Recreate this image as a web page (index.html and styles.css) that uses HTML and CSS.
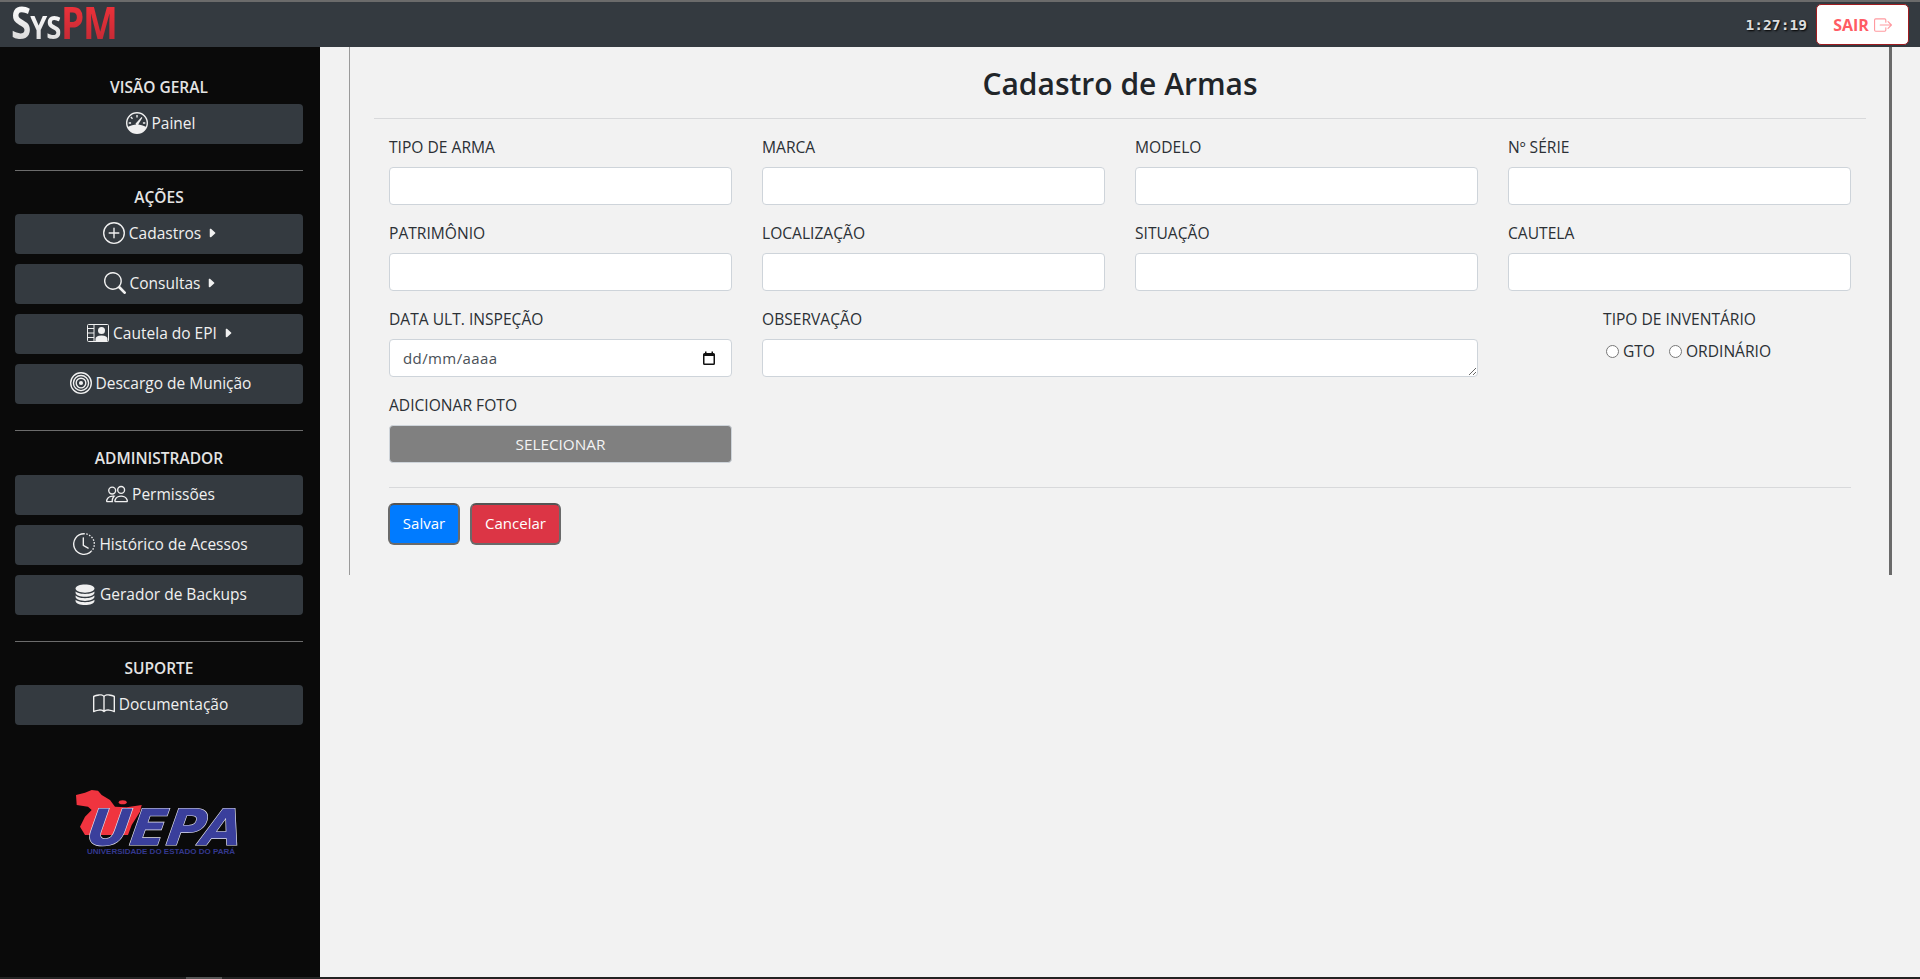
FILE: index.html
```html
<!DOCTYPE html>
<html lang="pt-BR">
<head>
<meta charset="utf-8">
<title>SysPM - Cadastro de Armas</title>
<link rel="stylesheet" href="styles.css">
</head>
<body>
<header class="topbar">
  <div class="brand"><span class="brand-s">S</span><span class="brand-ys">YS</span><span class="brand-pm">PM</span></div>
  <div class="top-right">
    <span class="clock">1:27:19</span>
    <a class="logout">SAIR
      <svg class="ic-logout" viewBox="0 0 16 16" fill="currentColor"><path fill-rule="evenodd" d="M10 12.5a.5.5 0 0 1-.5.5h-8a.5.5 0 0 1-.5-.5v-9a.5.5 0 0 1 .5-.5h8a.5.5 0 0 1 .5.5v2a.5.5 0 0 0 1 0v-2A1.5 1.5 0 0 0 9.5 2h-8A1.5 1.5 0 0 0 0 3.5v9A1.5 1.5 0 0 0 1.5 14h8a1.5 1.5 0 0 0 1.5-1.5v-2a.5.5 0 0 0-1 0v2z"/><path fill-rule="evenodd" d="M15.854 8.354a.5.5 0 0 0 0-.708l-3-3a.5.5 0 0 0-.708.708L14.293 7.5H5.5a.5.5 0 0 0 0 1h8.793l-2.147 2.146a.5.5 0 0 0 .708.708l3-3z"/></svg>
    </a>
  </div>
</header>
<div class="layout">
  <aside class="sidebar">
    <section class="side-group">
      <h6 class="side-title">VISÃO GERAL</h6>
      <a class="side-btn"><svg class="ic" viewBox="0 0 16 16" fill="currentColor"><path fill-rule="evenodd" d="M8 0a8 8 0 1 1 0 16A8 8 0 0 1 8 0zm0 1a7 7 0 0 0-6.4 9.8C3.2 9.7 5.5 9 8 9s4.800.7 6.400 1.800A7 7 0 0 0 8 1z"/><path d="M7.500 2.200h1v1.800h-1zM3.200 4l.7-.7 1.200 1.200-.7.7zM2 7.500h1.700v1H2zM12.300 7.500H14v1h-1.700zM11.300 3.700l.6.500-2.700 4.300a1.100 1.100 0 1 1-1.500-.9z"/></svg>Painel</a>
    </section>
    <hr class="side-rule">
    <section class="side-group">
      <h6 class="side-title">AÇÕES</h6>
      <a class="side-btn"><svg class="ic" viewBox="0 0 16 16" fill="currentColor"><path d="M8 15A7 7 0 1 1 8 1a7 7 0 0 1 0 14zm0 1A8 8 0 1 0 8 0a8 8 0 0 0 0 16z"/><path d="M8 4a.5.5 0 0 1 .5.5v3h3a.5.5 0 0 1 0 1h-3v3a.5.5 0 0 1-1 0v-3h-3a.5.5 0 0 1 0-1h3v-3A.5.5 0 0 1 8 4z"/></svg>Cadastros<svg class="caret" viewBox="0 0 16 16" fill="currentColor"><path d="m12.140 8.753-5.482 4.796c-.646.566-1.658.106-1.658-.753V3.204a1 1 0 0 1 1.659-.753l5.480 4.796a1 1 0 0 1 0 1.506z"/></svg></a>
      <a class="side-btn"><svg class="ic" viewBox="0 0 16 16" fill="currentColor"><path d="M11.742 10.344a6.500 6.500 0 1 0-1.397 1.398h-.001c.03.04.062.078.098.115l3.850 3.850a1 1 0 0 0 1.415-1.414l-3.850-3.850a1.007 1.007 0 0 0-.115-.1zM12 6.500a5.500 5.500 0 1 1-11 0 5.500 5.500 0 0 1 11 0z"/></svg>Consultas<svg class="caret" viewBox="0 0 16 16" fill="currentColor"><path d="m12.140 8.753-5.482 4.796c-.646.566-1.658.106-1.658-.753V3.204a1 1 0 0 1 1.659-.753l5.480 4.796a1 1 0 0 1 0 1.506z"/></svg></a>
      <a class="side-btn"><svg class="ic" viewBox="0 0 22 18" fill="none" stroke="currentColor"><rect x=".5" y=".5" width="21" height="17" rx="1"/><path d="M7 .5v17M.5 4.500H7M.5 9H7M.5 13.500H7"/><circle cx="14.500" cy="6.500" r="3.500" fill="currentColor" stroke="none"/><path d="M8.500 17v-2c0-2 2-3.500 6-3.500s6 1.500 6 3.500v2z" fill="currentColor" stroke="none"/></svg>Cautela do EPI<svg class="caret" viewBox="0 0 16 16" fill="currentColor"><path d="m12.140 8.753-5.482 4.796c-.646.566-1.658.106-1.658-.753V3.204a1 1 0 0 1 1.659-.753l5.480 4.796a1 1 0 0 1 0 1.506z"/></svg></a>
      <a class="side-btn"><svg class="ic" viewBox="0 0 16 16" fill="currentColor"><path d="M8 15A7 7 0 1 1 8 1a7 7 0 0 1 0 14zm0 1A8 8 0 1 0 8 0a8 8 0 0 0 0 16z"/><path d="M8 13A5 5 0 1 1 8 3a5 5 0 0 1 0 10zm0 1A6 6 0 1 0 8 2a6 6 0 0 0 0 12z"/><path d="M8 11a3 3 0 1 1 0-6 3 3 0 0 1 0 6zm0 1a4 4 0 1 0 0-8 4 4 0 0 0 0 8z"/><path d="M9.500 8a1.500 1.500 0 1 1-3 0 1.500 1.500 0 0 1 3 0z"/></svg>Descargo de Munição</a>
    </section>
    <hr class="side-rule">
    <section class="side-group">
      <h6 class="side-title">ADMINISTRADOR</h6>
      <a class="side-btn"><svg class="ic" viewBox="0 0 16 16" fill="currentColor"><path d="M15 14s1 0 1-1-1-4-5-4-5 3-5 4 1 1 1 1h8zm-7.978-1A.261.261 0 0 1 7 12.996c.001-.264.167-1.030.760-1.720C8.312 10.629 9.282 10 11 10c1.717 0 2.687.63 3.240 1.276.593.69.758 1.457.76 1.720l-.008.002a.274.274 0 0 1-.014.002H7.022zM11 7a2 2 0 1 0 0-4 2 2 0 0 0 0 4zm3-2a3 3 0 1 1-6 0 3 3 0 0 1 6 0zM6.936 9.280a5.880 5.880 0 0 0-1.230-.247A7.350 7.350 0 0 0 5 9c-4 0-5 3-5 4 0 .667.333 1 1 1h4.216A2.238 2.238 0 0 1 5 13c0-1.010.377-2.042 1.090-2.904.243-.294.526-.569.846-.816zM4.920 10A5.493 5.493 0 0 0 4 13H1c0-.26.164-1.030.760-1.724.545-.636 1.492-1.256 3.160-1.275zM1.500 5.500a3 3 0 1 1 6 0 3 3 0 0 1-6 0zm3-2a2 2 0 1 0 0 4 2 2 0 0 0 0-4z"/></svg>Permissões</a>
      <a class="side-btn"><svg class="ic" viewBox="0 0 16 16" fill="currentColor"><path d="M8.515 1.019A7 7 0 0 0 8 1V0a8 8 0 0 1 .589.022l-.074.997zm2.004.45a7.003 7.003 0 0 0-.985-.299l.219-.976c.383.086.76.2 1.126.342l-.36.933zm1.370.71a7.010 7.010 0 0 0-.439-.27l.493-.87a8.025 8.025 0 0 1 .979.654l-.615.789a6.996 6.996 0 0 0-.418-.302zm1.834 1.790a6.990 6.990 0 0 0-.653-.796l.724-.69c.27.285.52.59.747.91l-.818.576zm.744 1.352a7.080 7.080 0 0 0-.214-.468l.893-.45a7.976 7.976 0 0 1 .45 1.088l-.95.313a7.023 7.023 0 0 0-.179-.483zm.53 2.507a6.991 6.991 0 0 0-.1-1.025l.985-.17c.067.386.106.778.116 1.170l-1 .025zm-.131 1.538c.033-.17.06-.339.081-.51l.993.123a7.957 7.957 0 0 1-.23 1.155l-.964-.267c.046-.165.086-.332.12-.501zm-.952 2.379c.184-.29.346-.594.486-.908l.914.405c-.16.36-.345.706-.555 1.038l-.845-.535zm-.964 1.205c.122-.122.239-.248.35-.378l.758.653a8.073 8.073 0 0 1-.401.432l-.707-.707z"/><path d="M8 1a7 7 0 1 0 4.950 11.950l.707.707A8.001 8.001 0 1 1 8 0v1z"/><path d="M7.500 3a.5.5 0 0 1 .5.5v5.210l3.248 1.856a.5.5 0 0 1-.496.868l-3.500-2A.5.5 0 0 1 7 9V3.500a.5.5 0 0 1 .5-.5z"/></svg>Histórico de Acessos</a>
      <a class="side-btn"><svg class="ic" viewBox="1 0 14 16" preserveAspectRatio="none" fill="currentColor"><path d="M3.904 1.777C4.978 1.289 6.427 1 8 1s3.022.289 4.096.777C13.125 2.245 14 2.993 14 4s-.875 1.755-1.904 2.223C11.022 6.711 9.573 7 8 7s-3.022-.289-4.096-.777C2.875 5.755 2 5.007 2 4s.875-1.755 1.904-2.223Z"/><path d="M2 6.161V7c0 1.007.875 1.755 1.904 2.223C4.978 9.71 6.427 10 8 10s3.022-.289 4.096-.777C13.125 8.755 14 8.007 14 7v-.839c-.457.432-1.004.751-1.490.972C11.278 7.693 9.682 8 8 8s-3.278-.307-4.510-.867c-.486-.22-1.033-.54-1.490-.972Z"/><path d="M2 9.161V10c0 1.007.875 1.755 1.904 2.223C4.978 12.711 6.427 13 8 13s3.022-.289 4.096-.777C13.125 11.755 14 11.007 14 10v-.839c-.457.432-1.004.751-1.490.972-1.232.56-2.828.867-4.510.867s-3.278-.307-4.510-.867c-.486-.22-1.033-.54-1.490-.972Z"/><path d="M2 12.161V13c0 1.007.875 1.755 1.904 2.223C4.978 15.711 6.427 16 8 16s3.022-.289 4.096-.777C13.125 14.755 14 14.007 14 13v-.839c-.457.432-1.004.751-1.490.972-1.232.56-2.828.867-4.510.867s-3.278-.307-4.510-.867c-.486-.22-1.033-.54-1.490-.972Z"/></svg>Gerador de Backups</a>
    </section>
    <hr class="side-rule">
    <section class="side-group">
      <h6 class="side-title">SUPORTE</h6>
      <a class="side-btn"><svg class="ic" viewBox="0 0 16 16" fill="currentColor"><path d="M1 2.828c.885-.37 2.154-.769 3.388-.893 1.330-.134 2.458.063 3.112.752v9.746c-.935-.53-2.120-.603-3.213-.493-1.180.12-2.370.461-3.287.811V2.828zm7.500-.141c.654-.689 1.782-.886 3.112-.752 1.234.124 2.503.523 3.388.893v9.923c-.918-.35-2.107-.692-3.287-.81-1.094-.111-2.278-.039-3.213.492V2.687zM8 1.783C7.015.936 5.587.81 4.287.94c-1.514.153-3.042.672-3.994 1.105A.5.5 0 0 0 0 2.500v11a.5.5 0 0 0 .707.455c.882-.4 2.303-.881 3.680-1.020 1.409-.142 2.590.087 3.223.877a.5.5 0 0 0 .78 0c.633-.79 1.814-1.019 3.222-.877 1.378.139 2.800.62 3.681 1.020A.5.5 0 0 0 16 13.500v-11a.5.5 0 0 0-.293-.455c-.952-.433-2.480-.952-3.994-1.105C10.413.809 8.985.936 8 1.783z"/></svg>Documentação</a>
    </section>
    <svg class="uepa" viewBox="0 0 162 67">
      <path class="uepa-map" d="M1 7L10 4.700L16.700 2L23 2.700L26.700 7L35 12L40 18.700L51.700 19.300L66.700 17L65 23.700L56.700 37L53 47L10 47L5 38.700L10 28.700L16.700 22L13 18.700L1.700 17Z"/>
      <ellipse class="uepa-map" cx="47.700" cy="14.300" rx="4" ry="2"/>
      <text class="uepa-word" x="18" y="57" textLength="156" lengthAdjust="spacingAndGlyphs">UEPA</text>
      <text class="uepa-sub" x="12" y="66" textLength="148" lengthAdjust="spacingAndGlyphs">UNIVERSIDADE DO ESTADO DO PARÁ</text>
    </svg>
  </aside>
  <main class="content">
    <div class="panel">
      <h1 class="page-title">Cadastro de Armas</h1>
      <hr class="title-rule">
      <form class="form">
        <div class="grid">
          <label class="field"><span class="lbl">TIPO DE ARMA</span><input class="inp" type="text"></label>
          <label class="field"><span class="lbl">MARCA</span><input class="inp" type="text"></label>
          <label class="field"><span class="lbl">MODELO</span><input class="inp" type="text"></label>
          <label class="field"><span class="lbl">Nº SÉRIE</span><input class="inp" type="text"></label>
          <label class="field"><span class="lbl">PATRIMÔNIO</span><input class="inp" type="text"></label>
          <label class="field"><span class="lbl">LOCALIZAÇÃO</span><input class="inp" type="text"></label>
          <label class="field"><span class="lbl">SITUAÇÃO</span><input class="inp" type="text"></label>
          <label class="field"><span class="lbl">CAUTELA</span><input class="inp" type="text"></label>
          <label class="field"><span class="lbl">DATA ULT. INSPEÇÃO</span>
            <span class="inp date"><span class="date-ph">dd/mm/aaaa</span>
              <svg class="cal" viewBox="0 0 14 15"><path d="M1 3.500A1.500 1.500 0 0 1 2.500 2H3V.5h1.500V2h5V.5H11V2h.5A1.500 1.500 0 0 1 13 3.500v9a1.500 1.500 0 0 1-1.500 1.500h-9A1.500 1.500 0 0 1 1 12.500zM2.500 5v7.500h9V5z" fill="#111" fill-rule="evenodd"/></svg>
            </span>
          </label>
          <label class="field wide"><span class="lbl">OBSERVAÇÃO</span><textarea class="inp ta"></textarea></label>
          <div class="field inv">
            <span class="lbl">TIPO DE INVENTÁRIO</span>
            <div class="radios">
              <label class="radio"><input type="radio" name="inv">GTO</label>
              <label class="radio"><input type="radio" name="inv">ORDINÁRIO</label>
            </div>
          </div>
          <div class="field"><span class="lbl">ADICIONAR FOTO</span><button class="pick" type="button">SELECIONAR</button></div>
        </div>
        <hr class="form-rule">
        <div class="actions">
          <button class="btn btn-save" type="button">Salvar</button>
          <button class="btn btn-cancel" type="button">Cancelar</button>
        </div>
      </form>
    </div>
  </main>
</div>
<div class="hscroll"><span class="hthumb"></span></div>
</body>
</html>
```

FILE: styles.css
```css
* { box-sizing: border-box; }
html, body { margin: 0; height: 100%; overflow: hidden; }
body {
  display: flex;
  flex-direction: column;
  font-family: "Open Sans", "Noto Sans", sans-serif;
  font-size: 15px;
  color: #212529;
  background: #f2f2f2;
}
.topbar {
  height: 47px;
  flex: none;
  display: flex;
  justify-content: space-between;
  align-items: center;
  background: #343a40;
  border-top: 2px solid #6b6b6b;
  padding: 0 11px 0 11px;
}
.brand {
  font-weight: 700;
  font-size: 44px;
  letter-spacing: -1.500px;
  display: flex;
  align-items: baseline;
  transform: scaleX(.84);
  transform-origin: left center;
}
.brand-s, .brand-ys, .brand-pm {
  display: block;
  line-height: 40px;
  -webkit-background-clip: text;
  background-clip: text;
  color: transparent;
}
.brand-s, .brand-ys { background-image: linear-gradient(180deg, #fff, #d8d8d8); }
.brand-ys { font-size: 33px; }
.brand-pm {
  background-image: linear-gradient(180deg, #f0323a, #c42a35);
  margin-left: 1px;
}
.top-right { display: flex; align-items: center; gap: 9px; }
.clock {
  font-family: "DejaVu Sans Mono", "Liberation Mono", monospace;
  font-weight: 700;
  font-size: 14.600px;
  color: #ddd;
  text-shadow: 1px 1px 2px #000;
}
.logout {
  width: 93px;
  height: 41px;
  display: flex;
  align-items: center;
  justify-content: center;
  gap: 5px;
  background: #fff;
  border: 1px solid #a01c20;
  border-radius: 5px;
  color: #ff5c64;
  font-weight: 700;
  font-size: 16px;
}
.ic-logout { width: 18px; height: 18px; color: #ff9aa0; }
.layout { flex: 1; display: flex; min-height: 0; }
.sidebar {
  width: 320px;
  flex: none;
  background: #0a0a0a;
  padding: 30px 17px 0 15px;
  display: flex;
  flex-direction: column;
}
.side-group { display: flex; flex-direction: column; gap: 10px; }
.side-title {
  margin: 0 0 -3px;
  text-align: center;
  color: #e4e4e4;
  font-size: 15.500px;
  font-weight: 600;
  line-height: 20px;
}
.side-btn {
  height: 40px;
  display: flex;
  align-items: center;
  justify-content: center;
  gap: 4px;
  padding: 0 0 2px 3px;
  background: #343a40;
  border-radius: 4px;
  color: #f0f0f0;
  font-size: 15.500px;
}
.ic { width: 22px; height: 22px; flex: none; }
.caret { width: 12px; height: 12px; flex: none; margin-left: 1px; }
.side-rule {
  width: 100%;
  height: 1px;
  flex: none;
  border: 0;
  background: #6c6c6c;
  margin: 26px 0 16.400px;
}
.uepa { width: 162px; height: 67px; margin: 63px 0 0 60px; flex: none; overflow: visible; }
.uepa-map { fill: #f0343f; }
.uepa-word {
  font-family: "DejaVu Sans", sans-serif;
  font-style: italic;
  font-weight: 700;
  font-size: 50px;
  fill: #3a3f9c;
  stroke: #e4e4ee;
  stroke-width: 1.200;
  paint-order: stroke;
  transform: skewX(-8deg);
}
.uepa-sub {
  font-family: "Liberation Sans", sans-serif;
  font-weight: 700;
  font-size: 7px;
  fill: #34388f;
}
.content { flex: 1; min-width: 0; padding-left: 29px; }
.panel {
  width: 1543px;
  height: 528px;
  border-left: 1px solid #9a9a9a;
  border-right: 3px solid #6a6a6a;
  padding: 0 23px 0 24px;
  display: flex;
  flex-direction: column;
}
.page-title {
  margin: 0;
  height: 71px;
  line-height: 73px;
  text-align: center;
  font-size: 30px;
  font-weight: 600;
  color: #212529;
}
.title-rule, .form-rule {
  width: 100%;
  height: 1px;
  border: 0;
  background: #d8d9db;
  margin: 0;
  flex: none;
}
.form { padding: 0 15px; }
.grid {
  display: grid;
  grid-template-columns: repeat(4, 343px);
  column-gap: 30px;
  row-gap: 16px;
  padding-top: 16px;
}
.field { display: flex; flex-direction: column; min-width: 0; }
.lbl { font-size: 15.600px; line-height: 24px; margin-bottom: 8px; color: #2b3035; }
.inp {
  display: block;
  width: 100%;
  height: 38px;
  border: 1px solid #ced4da;
  border-radius: 4px;
  background: #fff;
  font: inherit;
  outline: 0;
  padding: 0;
  margin: 0;
}
.ta { resize: vertical; }
.wide { grid-column: span 2; }
.date {
  display: flex;
  align-items: center;
  justify-content: space-between;
  padding: 0 15px 0 13px;
  color: #495057;
  letter-spacing: .4px;
}
.cal { width: 14px; height: 15px; }
.inv { align-items: center; grid-column: 4; }
.radios { display: flex; gap: 14px; font-size: 15.600px; line-height: 24px; padding-left: 18px; color: #2b3035; }
.radio { display: flex; align-items: center; gap: 4px; }
.radio input { width: 13px; height: 13px; margin: 0; }
.pick {
  height: 38px;
  width: 100%;
  border: 1px solid #ced4da;
  border-radius: 4px;
  background: #808080;
  color: #f3f3f3;
  font: inherit;
  font-size: 15.300px;
}
.form-rule { margin-top: 24px; }
.actions { display: flex; gap: 10px; padding-top: 15px; margin-left: -1px; }
.btn {
  height: 42px;
  border: 2px solid #6a6a6a;
  border-top-color: #555;
  border-radius: 6px;
  color: #fff;
  font: inherit;
  padding: 0 12px 3px;
}
.btn-save { background: #007bff; width: 72px; }
.btn-cancel { background: #dc3545; width: 91px; }
.hscroll { height: 2px; flex: none; background: #232323; display: flex; padding-left: 186px; }
.hthumb { width: 36px; background: #555; }
```
